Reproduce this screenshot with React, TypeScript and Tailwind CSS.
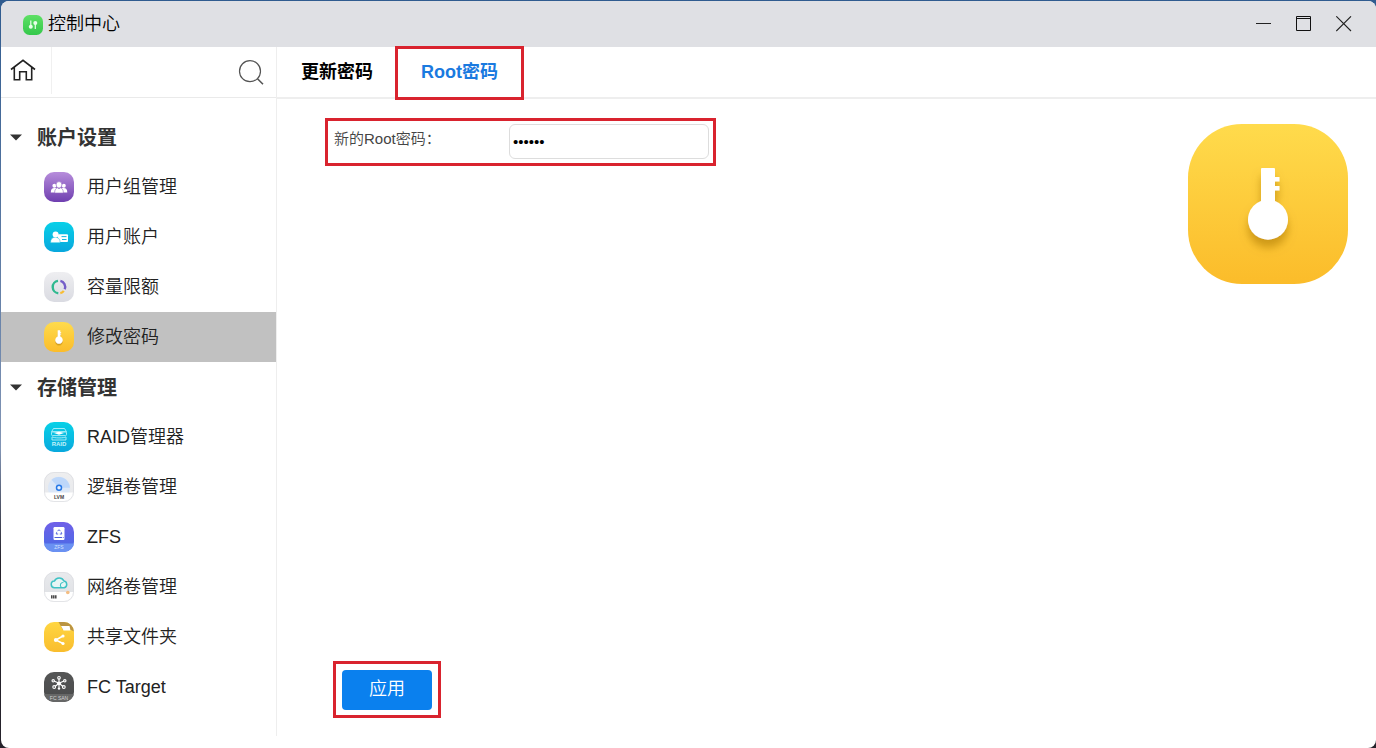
import React, { useState } from 'react';

function Tile({ id, from, to, children, ring }: { id: string; from: string; to: string; children?: React.ReactNode; ring?: boolean }) {
  return (
    <svg viewBox="0 0 30 30" className="size-[30px] shrink-0" aria-hidden="true">
      <defs>
        <linearGradient id={id} x1="0" y1="0" x2="0" y2="1">
          <stop offset="0" stopColor={from} />
          <stop offset="1" stopColor={to} />
        </linearGradient>
        <clipPath id={id + '-clip'}>
          <rect width="30" height="30" rx="10" />
        </clipPath>
      </defs>
      <g clipPath={`url(#${id}-clip)`}>
        <rect width="30" height="30" fill={`url(#${id})`} />
        {children}
      </g>
      {ring && <rect x="0.5" y="0.5" width="29" height="29" rx="9.5" fill="none" stroke="#dcdde1" strokeWidth="0.8" />}
    </svg>
  );
}

function KeyIcon({ id, className }: { id: string; className: string }) {
  return (
    <svg viewBox="0 0 160 160" className={className} aria-hidden="true">
      <defs>
        <linearGradient id={id} x1="0" y1="0" x2="0" y2="1">
          <stop offset="0" stopColor="#ffdb4c" />
          <stop offset="1" stopColor="#fbbc2a" />
        </linearGradient>
        <filter id={id + '-shadow'} x="-50%" y="-30%" width="200%" height="180%">
          <feDropShadow dx="0" dy="8" stdDeviation="4" floodColor="#a87400" floodOpacity="0.55" />
        </filter>
      </defs>
      <rect width="160" height="160" rx="54" fill={`url(#${id})`} />
      <path
        d="M74 44h12a1 1 0 0 1 1 1v8h4.500v4.500H87V62h4.500v4.500H87V77a20 20 0 1 1-14 0V45a1 1 0 0 1 1-1z"
        fill="#fff"
        filter={`url(#${id}-shadow)`}
      />
    </svg>
  );
}

const groupIcon = (
  <Tile id="grp" from="#b78ddb" to="#6f3fb0">
    <g fill="#fff">
      <circle cx="10.400" cy="13.700" r="2" />
      <circle cx="19.800" cy="13.700" r="2" />
      <path d="M6.800 20.600c0-3.200 1.200-4.600 3.800-4.600 1.200 0 2 .5 2.400 1.200v3.400zM23.300 20.600c0-3.200-1.200-4.600-3.800-4.600-1.200 0-2 .5-2.400 1.200v3.400z" />
    </g>
    <g fill="#fff" stroke="#9468c4" strokeWidth="0.600">
      <path d="M10.600 21c0-3.400 1.300-4.800 3.100-5.200l1.300.9 1.300-.9c1.800.4 3.100 1.800 3.100 5.200z" />
      <ellipse cx="15" cy="12.800" rx="2.900" ry="3.200" />
    </g>
  </Tile>
);

const accountIcon = (
  <Tile id="acc" from="#08d0e8" to="#08a7dd">
    <rect x="14" y="12.300" width="10" height="7.800" rx="1" fill="#fff" />
    <path d="M17.500 14.600h5M18 17.500h4.500" stroke="#16b9df" strokeWidth="1" />
    <path d="M6.500 20.700c0-3.600 1.800-5.400 4.800-5.400s4.900 1.800 4.900 5.400z" fill="#fff" stroke="#12bfe2" strokeWidth="0.500" />
    <circle cx="11.600" cy="12.500" r="3" fill="#fff" />
  </Tile>
);

const quotaIcon = (
  <Tile id="quo" from="#eeeef1" to="#dadbe2">
    <g fill="none" strokeWidth="2.400">
      <path d="M14 8.900A6.200 6.200 0 0 0 14.300 21.200" stroke="#2fb990" />
      <path d="M16.400 8.900A6.200 6.200 0 0 1 20.700 17.300" stroke="#755fc8" />
      <path d="M19.800 18.900A6.200 6.200 0 0 1 16.300 21.200" stroke="#f8bd34" />
    </g>
  </Tile>
);

const raidIcon = (
  <Tile id="raid" from="#08d1e7" to="#08a8dd">
    <g fill="none" stroke="#b4f0f8" strokeWidth="0.900">
      <path d="M9.500 6.500h11l2 3.300h-15z" />
      <rect x="7.500" y="9.800" width="15" height="3.800" rx="1" />
      <path d="M8 14.800c2 1.500 12 1.500 14 0M8 18h14v-3M8 18v-3" />
    </g>
    <path d="M10 11l5-1.200 5 1.200-5 1.700z" fill="#fff" />
    <text x="15" y="23.800" fontSize="6" fontWeight="700" textAnchor="middle" fill="#c6f3fa">RAID</text>
  </Tile>
);

const lvmIcon = (
  <Tile id="lvm" from="#eeeeef" to="#e6e8ec" ring>
    <circle cx="15" cy="15.800" r="11" fill="#dbe7f7" />
    <path d="M15 15.800L7.500 7.700a11 11 0 0 1 17.500 4.100 11 11 0 0 1 1 4z" fill="#bdd7fa" />
    <circle cx="15" cy="15.800" r="2.500" fill="#e7f1ff" stroke="#2779e7" strokeWidth="1.500" />
    <path d="M0 20.500h30V30H0z" fill="#fff" />
    <text x="15" y="27" fontSize="5" fontWeight="700" textAnchor="middle" fill="#444">LVM</text>
  </Tile>
);

const zfsIcon = (
  <Tile id="zfs" from="#7060e8" to="#466be5">
    <path d="M0 21.500h30V30H0z" fill="#6a91f2" />
    <rect x="9.500" y="5" width="11" height="13" rx="1.200" fill="#fff" />
    <path d="M10.500 15.500h7.500M18.800 15.500h.8" stroke="#5361d8" strokeWidth="1" />
    <path d="M13.500 9.200L15 7.700l1.500 1.500M17.300 10.200l.5 1.800h-2M12.700 10.200l-.5 1.800h2" fill="none" stroke="#5767dd" strokeWidth="1" />
    <text x="15" y="27" fontSize="5" textAnchor="middle" fill="#d4e2ff">ZFS</text>
  </Tile>
);

const cloudIcon = (
  <Tile id="cld" from="#e9eaed" to="#dddfe3" ring>
    <path d="M0 20h30v10H0z" fill="#fff" />
    <path d="M10.700 15.700a3.300 3.300 0 0 1-.3-6.600 5.200 5.200 0 0 1 9.500-.2 3.500 3.500 0 0 1 .3 6.800z" fill="#e6f5f5" stroke="#3ec2c4" strokeWidth="1.500" />
    <path d="M17.200 15.300c-1.800-2.200-.5-5 2.200-4.800" fill="none" stroke="#3ec2c4" strokeWidth="1.100" />
    <circle cx="23.800" cy="20.500" r="1.800" fill="#f4bd82" />
    <path d="M7.800 23.200v3.400M9.800 23.200v3.400M11.800 23.200v3.400" stroke="#444" strokeWidth="1.500" />
  </Tile>
);

const shareIcon = (
  <Tile id="shr" from="#ffd642" to="#f9bd2e">
    <path d="M14.500 0H30v9.500l-3-1.500h-8z" fill="#ba9443" />
    <path d="M17 4h8.500l1 4.500H19.500z" fill="#fff" />
    <path d="M19 14l-7.200 4 7.200 3.500" fill="none" stroke="#fff" strokeWidth="1.500" />
    <circle cx="19" cy="14" r="1.600" fill="#fff" />
    <circle cx="11.800" cy="18" r="1.900" fill="#fff" />
    <circle cx="19" cy="21.500" r="1.600" fill="#fff" />
  </Tile>
);

const fcIcon = (
  <Tile id="fc" from="#555656" to="#494a4b">
    <path d="M0 22h30v8H0z" fill="#666767" />
    <g fill="none" stroke="#fff" strokeWidth="1.100">
      <path d="M15 11V7M15 11.300L10 9M15 11.300L20 9M15 11.300L11 14.500M15 11.300L19 14.500M15 11v5" />
      <circle cx="15" cy="5.800" r="1.300" />
      <circle cx="9.200" cy="8.800" r="1.200" />
      <circle cx="20.800" cy="8.800" r="1.200" />
      <circle cx="10.200" cy="15" r="1.400" />
      <circle cx="19.800" cy="15" r="1.400" />
    </g>
    <circle cx="15" cy="11.300" r="1.900" fill="#fff" />
    <circle cx="15" cy="16.600" r="1.200" fill="#fff" />
    <text x="15" y="27.500" fontSize="5" textAnchor="middle" fill="#d2d2d2">FC SAN</text>
  </Tile>
);

const sections = [
  {
    title: '账户设置',
    items: [
      { label: '用户组管理', icon: groupIcon },
      { label: '用户账户', icon: accountIcon },
      { label: '容量限额', icon: quotaIcon },
      { label: '修改密码', icon: <KeyIcon id="key-small" className="size-[30px] shrink-0" /> },
    ],
  },
  {
    title: '存储管理',
    items: [
      { label: 'RAID管理器', icon: raidIcon },
      { label: '逻辑卷管理', icon: lvmIcon },
      { label: 'ZFS', icon: zfsIcon },
      { label: '网络卷管理', icon: cloudIcon },
      { label: '共享文件夹', icon: shareIcon },
      { label: 'FC Target', icon: fcIcon },
    ],
  },
];

function TitleBar() {
  return (
    <header className="flex h-[46px] shrink-0 items-center bg-[#dfe0e4] pr-3 pl-[22px]">
      <svg viewBox="0 0 20 20" className="mt-0.5 size-5" aria-hidden="true">
        <defs>
          <linearGradient id="app" x1="0" y1="0" x2="0" y2="1">
            <stop offset="0" stopColor="#5ee065" />
            <stop offset="1" stopColor="#34c84b" />
          </linearGradient>
        </defs>
        <rect width="20" height="20" rx="6.500" fill="url(#app)" />
        <path d="M7.800 5.500v6M12.300 8.500v5.500" stroke="#e8ffe9" strokeWidth="1.200" />
        <circle cx="7.800" cy="11.800" r="2" fill="#e8ffe9" />
        <circle cx="12.300" cy="8" r="2" fill="#e8ffe9" />
      </svg>
      <h1 className="ml-[5px] grow text-[18px] leading-6 font-[350] text-black">控制中心</h1>
      <button type="button" aria-label="最小化" className="flex size-10 items-center justify-center">
        <svg viewBox="0 0 16 16" className="size-4"><path d="M0 7.500h15" stroke="#222" /></svg>
      </button>
      <button type="button" aria-label="最大化" className="flex size-10 items-center justify-center">
        <svg viewBox="0 0 16 16" className="size-4" fill="none" stroke="#111"><path d="M0.500 0.500h14v14h-14zM0.500 2.500h14" /></svg>
      </button>
      <button type="button" aria-label="关闭" className="flex size-10 items-center justify-center">
        <svg viewBox="0 0 16 16" className="size-4"><path d="M0.300 0.300l14.700 14.700M15 0.300L0.300 15" stroke="#222" strokeWidth="1.100" /></svg>
      </button>
    </header>
  );
}

function Sidebar() {
  const [active, setActive] = useState('修改密码');
  return (
    <aside className="mb-3 flex w-[276px] shrink-0 flex-col border-r border-[#eeeeee]">
      <div className="flex h-[51px] border-b border-[#eaeaea]">
        <button type="button" aria-label="主页" className="mb-[3px] flex w-[51px] shrink-0 items-center border-r border-[#f0f0f0] pl-[9px]">
          <svg viewBox="0 0 26 24" className="h-6 w-[26px]" fill="none" stroke="#222" strokeWidth="1.600">
            <path d="M1 10.500L13 1.300l12 9.200M4.300 8.500v12.200h5.400v-8h6.600v8h5.400V8.500" />
          </svg>
        </button>
        <input type="text" aria-label="搜索" className="min-w-0 grow px-2 text-[18px] outline-none" />
        <button type="button" aria-label="查找" className="flex shrink-0 items-center pr-3">
          <svg viewBox="0 0 26 26" className="size-[26px]" fill="none" stroke="#555" strokeWidth="1.200">
            <circle cx="12" cy="12.200" r="10.500" />
            <path d="M19.500 19.700l5.500 5.500" strokeWidth="1.600" />
          </svg>
        </button>
      </div>
      <nav className="pt-[14px]">
        {sections.map((section) => (
          <section key={section.title}>
            <h2>
              <button type="button" className="flex h-[50px] w-full items-center gap-[15px] pl-[9px] text-[20px] leading-6 font-bold text-[#333333]">
                <svg viewBox="0 0 12 7" className="h-[7px] w-3" aria-hidden="true"><path d="M0 0.500h12L6 6.500z" fill="#333" /></svg>
                <span className="pt-0.5">{section.title}</span>
              </button>
            </h2>
            <ul>
              {section.items.map((item) => (
                <li key={item.label}>
                  <button
                    type="button"
                    onClick={() => setActive(item.label)}
                    className={
                      'flex h-[50px] w-full items-center gap-[13px] pl-[43px] text-[18px] leading-6 font-[350] text-[#222222] ' +
                      (active === item.label ? 'bg-[#c1c1c1]' : '')
                    }
                  >
                    {item.icon}
                    <span>{item.label}</span>
                  </button>
                </li>
              ))}
            </ul>
          </section>
        ))}
      </nav>
    </aside>
  );
}

export default function App() {
  return (
    <div className="flex min-h-screen flex-col bg-linear-to-b from-[#2f5b8f] from-0% via-[#8295b5] via-60% to-[#25222b] to-75% pt-px pl-px font-['Liberation_Sans','Noto_Sans_CJK_SC',sans-serif]">
      <div className="flex grow flex-col overflow-hidden rounded-lg bg-white">
        <TitleBar />
        <div className="flex grow">
          <Sidebar />
          <main className="flex min-w-0 grow flex-col">
            <div role="tablist" className="flex h-[52px] shrink-0 border-b-2 border-[#eeeeee] text-[18px] leading-6 font-bold">
              <button type="button" role="tab" aria-selected="false" className="px-6 text-black">更新密码</button>
              <button type="button" role="tab" aria-selected="true" className="relative px-6 text-[#1a7ae0]">
                Root密码
                <span className="absolute -inset-x-0.5 -top-px -bottom-[3px] border-3 border-[#d9232e]" />
              </button>
            </div>
            <form className="flex grow flex-col items-start pr-7 pb-[30px] pl-12" onSubmit={(e) => e.preventDefault()}>
              <div className="flex w-full items-start justify-between">
                <div className="mt-[19px] flex h-12 items-start border-3 border-[#d9232e] pt-[3px] pr-1 pl-[6px]">
                  <label htmlFor="root-password" className="w-[175px] pt-[5px] text-[15px] leading-5 font-[350] text-[#444444]">
                    新的Root密码：
                  </label>
                  <input
                    id="root-password"
                    type="password"
                    defaultValue="abcdef"
                    className="h-[35px] w-[200px] rounded-md border border-[#dddddd] bg-white px-[3px] text-[15px] text-black outline-none"
                  />
                </div>
                <KeyIcon id="key-large" className="mt-[25px] size-40 shrink-0" />
              </div>
              <div className="mt-auto ml-2 border-3 border-[#d9232e] px-[6px] pt-[6px] pb-[5px]">
                <button type="submit" className="block h-10 w-[90px] rounded bg-[#0a80ee] pb-0.5 text-[18px] leading-6 font-[350] text-white">
                  应用
                </button>
              </div>
            </form>
          </main>
        </div>
      </div>
    </div>
  );
}
